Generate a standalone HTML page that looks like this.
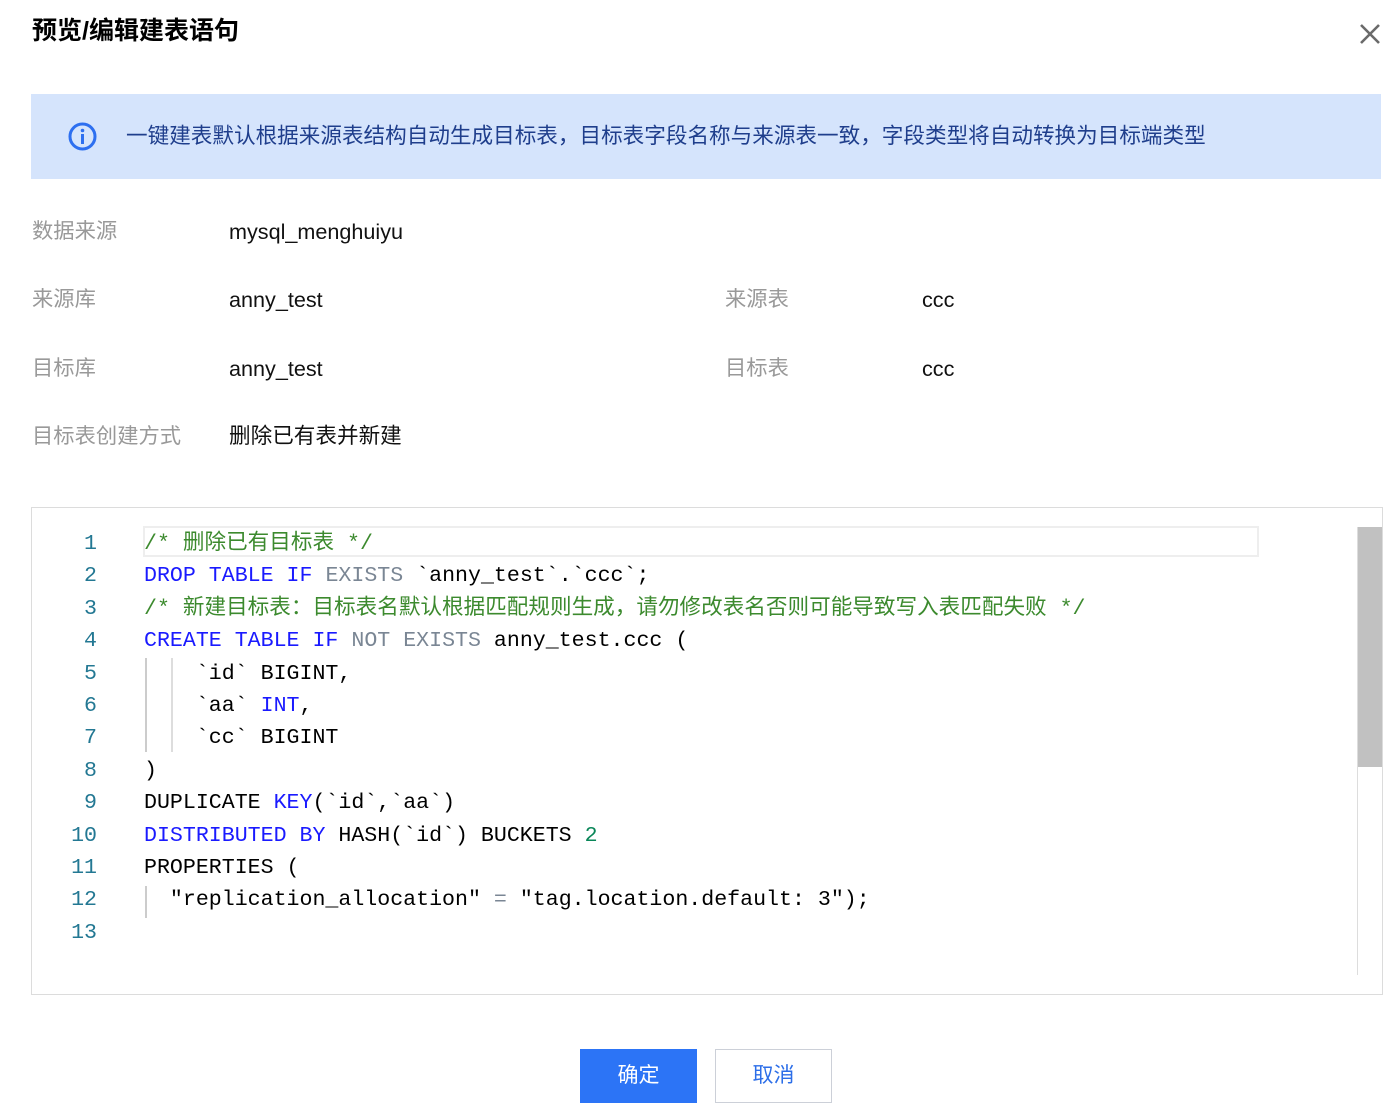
<!DOCTYPE html>
<html><head><meta charset="utf-8"><style>
*{margin:0;padding:0;box-sizing:border-box}
body{width:1400px;height:1116px;background:#fff;font-family:"Liberation Sans","Noto Sans CJK SC",sans-serif;position:relative;overflow:hidden}
.abs{position:absolute}
h1{position:absolute;left:32px;top:15px;font-size:25px;line-height:32px;font-weight:bold;color:#000;font-family:"Liberation Sans","Noto Sans CJK SC",sans-serif;white-space:nowrap}
.close{position:absolute;left:1358px;top:22px;width:24px;height:24px}
.info{position:absolute;left:31px;top:94px;width:1350px;height:85px;background:#d5e4fc}
.info .t{position:absolute;left:95px;top:27px;font-size:21.6px;line-height:30px;color:#1f3e8c;white-space:nowrap}
.lab{position:absolute;font-size:21.3px;line-height:30px;color:#999;white-space:nowrap}
.val{position:absolute;font-size:21.6px;line-height:30px;color:#111;white-space:nowrap}
.ed{position:absolute;left:31px;top:507px;width:1352px;height:488px;border:1px solid #dcdcdc;background:#fff}
.code{position:absolute;left:0;top:528px;font-family:"Liberation Mono","Noto Sans CJK SC",monospace;font-size:21.6px;line-height:32.4px;white-space:pre}
.ln{position:absolute;left:40px;width:57px;text-align:right;color:#237893;font-family:"Liberation Mono",monospace;font-size:21.6px;line-height:32.4px;top:528px;white-space:pre}
.c{color:#3c8a2e}.k{color:#1a1aff}.g{color:#7a8694}.n{color:#098658}
.btn{position:absolute;top:1049px;height:54px;font-size:21px;text-align:center;line-height:54px}
</style></head><body>
<h1>预览/编辑建表语句</h1>
<svg class="close" viewBox="0 0 24 24"><path d="M3 3L21 21M21 3L3 21" stroke="#6a6a6a" stroke-width="2.6"/></svg>
<div class="info">
<svg class="abs" style="left:36px;top:27px" width="31" height="31" viewBox="0 0 31 31"><circle cx="15.5" cy="15.5" r="12.5" fill="none" stroke="#2d6ff0" stroke-width="3"/><circle cx="15.5" cy="9.5" r="1.8" fill="#2d6ff0"/><rect x="14" y="13" width="3" height="10" fill="#2d6ff0"/></svg>
<div class="t">一键建表默认根据来源表结构自动生成目标表，目标表字段名称与来源表一致，字段类型将自动转换为目标端类型</div>
</div>
<div class="lab" style="left:32px;top:216px">数据来源</div><div class="val" style="left:229px;top:217px">mysql_menghuiyu</div>
<div class="lab" style="left:32px;top:284px">来源库</div><div class="val" style="left:229px;top:285px">anny_test</div>
<div class="lab" style="left:725px;top:284px">来源表</div><div class="val" style="left:922px;top:285px">ccc</div>
<div class="lab" style="left:32px;top:353px">目标库</div><div class="val" style="left:229px;top:354px">anny_test</div>
<div class="lab" style="left:725px;top:353px">目标表</div><div class="val" style="left:922px;top:354px">ccc</div>
<div class="lab" style="left:32px;top:421px">目标表创建方式</div><div class="val" style="left:229px;top:421px">删除已有表并新建</div>
<div class="ed">
<div class="abs" style="left:111px;top:18px;width:1116px;height:31px;border:2px solid #eee"></div>
<div class="abs" style="left:1325px;top:19px;width:25px;height:240px;background:#c1c1c1"></div>
<div class="abs" style="left:1325px;top:19px;width:1px;height:448px;background:#ddd"></div>
<div class="abs" style="left:113px;top:150px;width:2px;height:94px;background:#ccc"></div>
<div class="abs" style="left:139px;top:150px;width:2px;height:94px;background:#ddd"></div>
<div class="abs" style="left:113px;top:378px;width:2px;height:32px;background:#ccc"></div>
</div>
<div class="ln">1
2
3
4
5
6
7
8
9
10
11
12
13</div>
<div class="code" style="left:144px"><span class="c">/* 删除已有目标表 */</span>
<span class="k">DROP TABLE IF</span> <span class="g">EXISTS</span> `anny_test`.`ccc`;
<span class="c">/* 新建目标表：目标表名默认根据匹配规则生成，请勿修改表名否则可能导致写入表匹配失败 */</span>
<span class="k">CREATE TABLE IF</span> <span class="g">NOT EXISTS</span> anny_test.ccc (
    `id` BIGINT,
    `aa` <span class="k">INT</span>,
    `cc` BIGINT
)
DUPLICATE <span class="k">KEY</span>(`id`,`aa`)
<span class="k">DISTRIBUTED BY</span> HASH(`id`) BUCKETS <span class="n">2</span>
PROPERTIES (
  "replication_allocation" <span class="g">=</span> "tag.location.default: 3");
</div>
<div class="btn" style="left:580px;width:117px;background:#2c74f6;color:#fff">确定</div>
<div class="btn" style="left:715px;width:117px;border:1px solid #ccd0d8;color:#2c6ee8;line-height:52px">取消</div>
</body></html>
